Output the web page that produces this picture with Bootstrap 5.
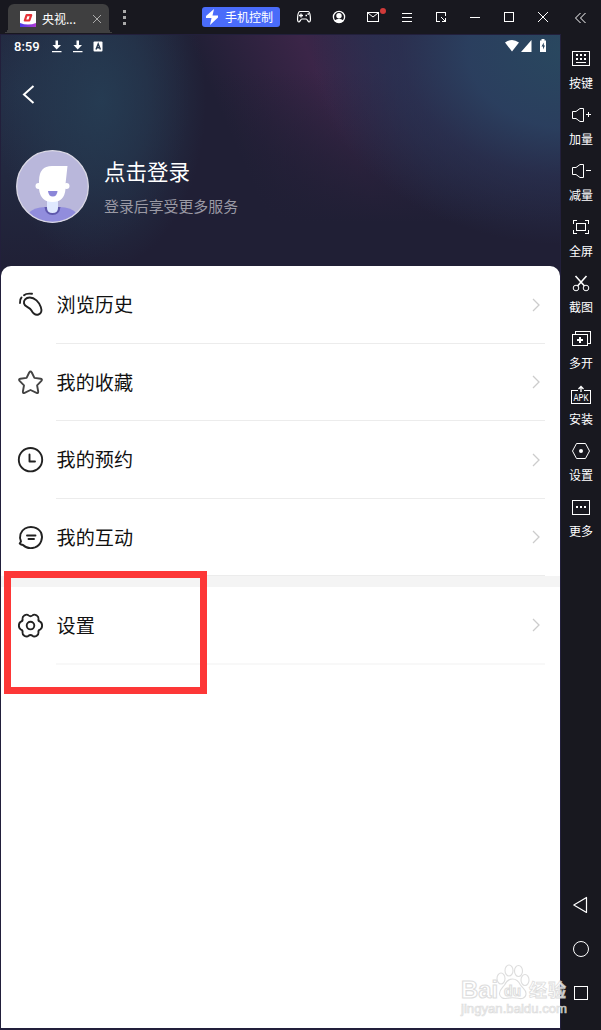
<!DOCTYPE html>
<html lang="zh-CN">
<head>
    <meta charset="UTF-8">
    <meta name="viewport" content="width=device-width, initial-scale=1.0">
    <title>央视频</title>
    <link rel="stylesheet" href="https://cdn.jsdelivr.net/npm/bootstrap@5.3.0/dist/css/bootstrap.min.css">
    <style>
        body {
            font-family: "Noto Sans CJK SC", "Noto Sans", sans-serif;
            background: #18181f;
            color: #fff;
            overflow: hidden;
        }
        svg { display: block; flex: none; }
        .emulator { width: 601px; height: 1030px; }
        .titlebar { height: 34px; }
        .app-tab {
            width: 101px;
            height: 29px;
            margin: 4px 0 0 8px;
            background: #3f3f40;
            border-radius: 6px 6px 0 0;
            font-size: 12px;
            line-height: 28px;
            padding-left: 12px;
        }
        .app-tab::before, .app-tab::after {
            content: "";
            position: absolute;
            bottom: 0;
            width: 5px;
            height: 5px;
        }
        .app-tab::before { left: -5px; background: radial-gradient(circle at 0 0, transparent 5px, #3f3f40 5px); }
        .app-tab::after { right: -5px; background: radial-gradient(circle at 100% 0, transparent 5px, #3f3f40 5px); }
        .tab-name { width: 43px; margin-left: 6px; white-space: nowrap; }
        .phone-btn {
            width: 78px;
            height: 20px;
            margin: 7px 8px 0 70px;
            border-radius: 3px;
            background: #4a6cfa;
            font-size: 12px;
            line-height: 20px;
        }
        .win-icon { width: 34px; height: 34px; }
        .screen { width: 561px; border: 1px solid #221f3b; border-bottom-width: 2px; background: #fff; }
        .profile {
            height: 241px;
            margin-bottom: -10px;
            background:
                radial-gradient(ellipse 105px 170px at 100px 65px, rgba(38, 61, 84, .9) 0, rgba(38, 60, 83, .6) 45%, rgba(32, 31, 53, 0) 100%),
                radial-gradient(ellipse 170px 190px at 20px 55px, rgba(36, 50, 74, .9) 0, rgba(32, 31, 53, 0) 100%),
                radial-gradient(ellipse 260px 195px at 570px 15px, #29485f 0, rgba(43, 64, 96, .95) 40%, rgba(44, 54, 88, .6) 65%, rgba(32, 31, 53, 0) 100%),
                linear-gradient(180deg, rgba(32, 31, 53, 0) 15%, rgba(32, 31, 53, .6) 50%, #201f35 78%),
                linear-gradient(66deg, rgba(60, 38, 72, 0) 44%, rgba(62, 38, 74, .9) 61%, rgba(48, 44, 80, .7) 72%, rgba(40, 44, 76, 0) 95%),
                #201f35;
        }
        .status { height: 24px; padding: 0 13px 0 13px; font: 500 13px/24px Roboto, sans-serif; }
        .back { padding: 26px 0 0 20px; height: 91px; }
        .account { padding-left: 15px; }
        .account-text { margin-left: 15px; }
        .login-name { font-size: 21.5px; line-height: 30px; margin-top: 6px; }
        .login-tip { font-size: 14.9px; line-height: 22px; color: #9a99a4; margin-top: 9px; }
        .menu-list { background: #fff; border-radius: 10px 10px 0 0; color: #111; }
        .menu-row { height: 78px; padding-left: 16px; }
        .menu-row.short { height: 77px; }
        .menu-text {
            margin-left: 12px;
            margin-right: 15px;
            font-size: 19.1px;
            height: 100%;
            border-bottom: 1px solid #ececec;
            padding: 0 4px 0 .6px;
        }
        .soft .menu-text { border-bottom: 2px solid #f8f8f8; }
        .band { height: 11px; background: #f4f4f4; }
        .sidebar { width: 40px; padding: 13px 0 15px; font-size: 12px; }
        .side-item { height: 56px; line-height: 23px; }
        .nav-key { height: 44px; }
        .marker { left: 4px; top: 571px; width: 203px; height: 123px; border: 7px solid #fd3737; }
        .watermark { left: 455px; top: 960px; }
        .line-art { fill: none; stroke: #fff; stroke-width: 1; }
        .crisp { shape-rendering: crispEdges; }
        .dark-art { fill: none; stroke: #222; stroke-width: 1.9; stroke-linecap: round; stroke-linejoin: round; }
        .chev { fill: none; stroke: #ccc; stroke-width: 1.3; }
    </style>
</head>
<body>
<div class="emulator position-relative d-flex flex-column">
    <!-- Title bar -->
    <div class="titlebar d-flex">
        <div class="app-tab position-relative d-flex align-items-center">
            <svg width="16" height="16" viewBox="0 0 16 16">
                <defs><linearGradient id="logoBase"><stop stop-color="#4a38e8"/><stop offset="1" stop-color="#b13bd3"/></linearGradient></defs>
                <path fill="#fff" d="M0 0h16v16H0z"/>
                <path fill="url(#logoBase)" d="M0 12q8 3 16 0v4H0z"/>
                <path fill="none" stroke="#e63338" stroke-width="2.2" stroke-linejoin="round" d="M6.6 4.2h4.6L9.3 9.5H4.8z"/>
            </svg>
            <span class="tab-name">央视...</span>
            <svg class="ms-1" width="16" height="16" viewBox="0 0 16 16"><path stroke="#aaa" stroke-width="1" d="M4 4l8 8M12 4l-8 8"/></svg>
        </div>
        <svg class="crisp ms-2" width="15" height="34" viewBox="0 0 15 34" fill="#aaa"><path d="M6 10h3v3H6zM6 16h3v3H6zM6 22h3v3H6z"/></svg>
        <div class="phone-btn d-flex align-items-center">
            <svg width="23" height="20" viewBox="0 0 23 20"><path fill="#fff" d="M12 2L4 9v2h5.500L8 18l8-7.500V8.500h-5.500z"/></svg>
            <span>手机控制</span>
        </div>
        <svg class="win-icon line-art" viewBox="0 0 34 34">
            <path stroke-width="1.2" d="M12 11.5h8c1.5 0 2 2 2.3 5s.2 5.500-1.100 5.500-1.900-3-3-3h-4.400c-1.100 0-1.700 3-3 3s-1.400-2.500-1.100-5.500.8-5 2.300-5z"/>
            <path d="M13 13.5v4M11 15.5h4M17.5 15.5h1.500M19.5 14h1.500" stroke-width="1.300"/>
        </svg>
        <svg class="win-icon line-art" viewBox="0 0 34 34">
            <circle cx="17" cy="17" r="5.6" stroke-width="1.3"/>
            <circle cx="17" cy="15.7" r="2.7" fill="#fff" stroke="none"/>
            <path d="M12.5 20.5q4.500-3.500 9 0-4.500 4.500-9 0z" fill="#fff" stroke="none"/>
        </svg>
        <svg class="win-icon line-art" viewBox="0 0 34 34">
            <rect x="11.5" y="12.5" width="11" height="9"/>
            <path d="M12 13l5 4 5-4"/>
            <circle cx="27" cy="11" r="3" fill="#d03a3a" stroke="none"/>
        </svg>
        <svg class="win-icon line-art crisp" viewBox="0 0 34 34"><path d="M12 13.5h10M12 17.5h10M12 21.5h10"/></svg>
        <svg class="win-icon line-art crisp" viewBox="0 0 34 34"><path d="M16 21.5h-3.500v-9h9V16M17 17l4.500 4.500M21.500 18v3.500H18"/></svg>
        <svg class="win-icon line-art crisp" viewBox="0 0 34 34"><path d="M12 17.5h10"/></svg>
        <svg class="win-icon line-art crisp" viewBox="0 0 34 34"><rect x="12.5" y="12.5" width="9" height="9"/></svg>
        <svg class="win-icon line-art" viewBox="0 0 34 34"><path d="M12 12l10 10M22 12l-10 10"/></svg>
        <svg class="line-art" width="41" height="34" viewBox="0 0 41 34"><path d="M20.5 13l-5 5 5 5M25.5 13l-5 5 5 5"/></svg>
    </div>

    <div class="d-flex flex-grow-1">
        <!-- App screen -->
        <div class="screen">
            <div class="profile">
                <div class="status d-flex align-items-center">
                    <span>8:59</span>
                    <svg width="66" height="24" viewBox="0 0 66 24" fill="#fff">
                        <path d="M15.5 5.5H18V10h3l-4.300 4.500L12.500 10h3zM12 16h9.500v1.200H12z"/>
                        <path d="M36.5 5.5H39V10h3l-4.300 4.500L33.500 10h3zM33 16h9.500v1.200H33z"/>
                        <rect x="53.5" y="6.5" width="9" height="10" rx="1"/>
                        <path d="M56 14.5l2.200-5.500 2.200 5.500M57 12.8h2.500" fill="none" stroke="#26384e" stroke-width="1.4"/>
                    </svg>
                    <svg class="ms-auto" width="43" height="24" viewBox="0 0 43 24" fill="#fff">
                        <path d="M1 7.5Q8 2.500 15 7.500L8 16.500zM27.500 5v12H17zM36 5.500h1.500V4h3v1.500H42v11q0 .5-.5.500h-5q-.5 0-.5-.5z"/>
                        <path d="M39.8 7.5L37.500 11.500H39v3l2-4h-1.200z" fill="#2b465f"/>
                    </svg>
                </div>
                <div class="back">
                    <svg width="16" height="22" viewBox="0 0 16 22"><path d="M12.5 1L3 9.500l9.500 8.500" fill="none" stroke="#fff" stroke-width="2"/></svg>
                </div>
                <div class="account d-flex">
                    <svg width="73" height="73" viewBox="0 0 73 73">
                        <defs><clipPath id="avatarClip"><circle cx="36.5" cy="36.5" r="36"/></clipPath></defs>
                        <g clip-path="url(#avatarClip)">
                            <path fill="#b9b7db" d="M0 0h73v73H0z"/>
                            <path fill="#918ddd" d="M12 73V64q5-7 18-7h13q13 0 18 7v9z"/>
                            <path fill="#5f59ad" d="M28.5 57h16q-1 8-8 8t-8-8z"/>
                            <path fill="#e0e9ff" d="M31 47h11v11q0 5-5.500 5T31 58z"/>
                            <circle cx="22.5" cy="36" r="3" fill="#fff"/><circle cx="50.5" cy="36" r="3" fill="#fff"/>
                            <path fill="#fff" d="M23 31q0-15 13-15h15.500L49.500 34v5q-1 13-13 13T23 39z"/>
                            <path fill="#8b86d8" d="M32 41h9.500q-.5 5.500-4.700 5.500T32 41z"/>
                        </g>
                        <circle cx="36.5" cy="36.5" r="35.8" fill="none" stroke="#d9d7e4" stroke-width="1.3"/>
                    </svg>
                    <div class="account-text">
                        <div class="login-name">点击登录</div>
                        <div class="login-tip">登录后享受更多服务</div>
                    </div>
                </div>
            </div>

            <div class="menu-list position-relative">
                <div class="menu-row d-flex align-items-center">
                    <svg class="dark-art" width="27" height="28" viewBox="0 0 27 28">
                        <path d="M3 12Q2.500 8.500 4.500 6.500M7 4.200Q9.500 2 15 2.800"/>
                        <path d="M12.800 6.500C8.500 6.500 6.500 9.500 7 12.500c.6 3.500 5.500 3.500 7.500 7 1.500 2.800 4 5 7 4 3-1 3.500-4 2.300-7.500C22 11 17.800 6.500 12.800 6.500z"/>
                    </svg>
                    <div class="menu-text d-flex flex-grow-1 align-items-center justify-content-between">浏览历史<svg class="chev" width="10" height="14" viewBox="0 0 10 14"><path d="M2 1l6 6-6 6"/></svg></div>
                </div>
                <div class="menu-row short d-flex align-items-center">
                    <svg class="dark-art" width="27" height="28" viewBox="0 0 27 28">
                        <path stroke="#444" d="M12.2 3.5q1.300-2 2.600 0l2.600 5.400 6.300.9q2.100.4.700 2.100l-4.300 4.400 1.100 6.200q.2 2.100-1.700 1.300L13.500 21 7.600 23.800q-1.900.8-1.700-1.300l1.100-6.200-4.400-4.400q-1.400-1.700.7-2.100l6.300-.9z"/>
                    </svg>
                    <div class="menu-text d-flex flex-grow-1 align-items-center justify-content-between">我的收藏<svg class="chev" width="10" height="14" viewBox="0 0 10 14"><path d="M2 1l6 6-6 6"/></svg></div>
                </div>
                <div class="menu-row d-flex align-items-center">
                    <svg class="dark-art" width="27" height="28" viewBox="0 0 27 28">
                        <circle cx="13.5" cy="13.7" r="11.7"/><path d="M12.5 8.500v7h5.500"/>
                    </svg>
                    <div class="menu-text d-flex flex-grow-1 align-items-center justify-content-between">我的预约<svg class="chev" width="10" height="14" viewBox="0 0 10 14"><path d="M2 1l6 6-6 6"/></svg></div>
                </div>
                <div class="menu-row short d-flex align-items-center">
                    <svg class="dark-art" width="27" height="28" viewBox="0 0 27 28">
                        <path d="M4 17.5C1.800 12.500 3.500 7 8 4.500 13.500 1.500 21 3 24 8.500c2.500 5.500 0 12.500-6 14.800-4.500 1.500-9 .7-12-2.300q-2-.3-3.300-1.500L4 17.500z"/>
                        <path d="M10 11.5h8.500M11.500 15h5.500"/>
                    </svg>
                    <div class="menu-text d-flex flex-grow-1 align-items-center justify-content-between">我的互动<svg class="chev" width="10" height="14" viewBox="0 0 10 14"><path d="M2 1l6 6-6 6"/></svg></div>
                </div>
                <div class="band"></div>
                <div class="menu-row soft d-flex align-items-center">
                    <svg class="dark-art" width="27" height="28" viewBox="0 0 27 28">
                        <g transform="translate(13.5 13.6)">
                            <path d="M9.500 4Q11.600 3 11.600 0T9.500-4Q7.500-4.600 8-6.700Q8.200-9 6-10.300Q3.500-11.700 2-10.200Q0-8.500-2-10.200Q-3.500-11.700-6-10.300Q-8.200-9-8-6.700Q-7.500-4.600-9.500-4Q-11.600-3-11.600 0T-9.500 4Q-7.500 4.600-8 6.700Q-8.200 9-6 10.300Q-3.500 11.700-2 10.200Q0 8.500 2 10.200Q3.500 11.700 6 10.300Q8.200 9 8 6.700Q7.500 4.600 9.500 4z"/>
                            <circle r="3.8"/>
                        </g>
                    </svg>
                    <div class="menu-text d-flex flex-grow-1 align-items-center justify-content-between">设置<svg class="chev" width="10" height="14" viewBox="0 0 10 14"><path d="M2 1l6 6-6 6"/></svg></div>
                </div>
            </div>
        </div>

        <!-- Emulator tools -->
        <div class="sidebar d-flex flex-column">
            <div class="side-item d-flex flex-column align-items-center">
                <svg class="line-art crisp" width="24" height="24" viewBox="0 0 24 24"><rect x="3.5" y="4.5" width="17" height="14"/><path stroke-width="2" stroke-dasharray="2 2" d="M7 8h10M7 12h10"/><path d="M7 15.5h10"/></svg>
                <span>按键</span>
            </div>
            <div class="side-item d-flex flex-column align-items-center">
                <svg class="line-art" width="24" height="24" viewBox="0 0 24 24"><path d="M3.5 8.500v7H7l4 3h3.500v-13H11l-4 3zM17 11.500h5M19.500 9v5"/></svg>
                <span>加量</span>
            </div>
            <div class="side-item d-flex flex-column align-items-center">
                <svg class="line-art" width="24" height="24" viewBox="0 0 24 24"><path d="M3.5 8.500v7H7l4 3h3.500v-13H11l-4 3zM17 11.500h5"/></svg>
                <span>减量</span>
            </div>
            <div class="side-item d-flex flex-column align-items-center">
                <svg class="line-art crisp" width="24" height="24" viewBox="0 0 24 24"><rect x="7.5" y="8.5" width="9" height="7"/><path d="M4.500 9V5.500H8M16 5.500h3.500V9M19.500 15v3.500H16M8 18.500H4.500V15"/></svg>
                <span>全屏</span>
            </div>
            <div class="side-item d-flex flex-column align-items-center">
                <svg class="line-art" width="24" height="24" viewBox="0 0 24 24"><circle cx="7" cy="17" r="2.8"/><circle cx="17" cy="17" r="2.8"/><path stroke-width="1.6" d="M6.500 5l9 10M17.500 5l-9 10"/></svg>
                <span>截图</span>
            </div>
            <div class="side-item d-flex flex-column align-items-center">
                <svg class="line-art crisp" width="24" height="24" viewBox="0 0 24 24"><rect x="3.5" y="7.5" width="15" height="11"/><path d="M6.500 7V4.500h15v12H19"/><path stroke-width="2" d="M8 13h6M11 10v6"/></svg>
                <span>多开</span>
            </div>
            <div class="side-item d-flex flex-column align-items-center">
                <svg class="line-art" width="24" height="24" viewBox="0 0 24 24"><path class="crisp" d="M9 7.500H2.500v13h19v-13H15"/><path d="M12 9V4M9.500 6L12 3.500 14.500 6" stroke-width="1.3"/><text x="4.5" y="17.5" textLength="15" lengthAdjust="spacingAndGlyphs" font-family="Liberation Mono, monospace" font-size="10" fill="#fff" stroke="none">APK</text></svg>
                <span>安装</span>
            </div>
            <div class="side-item d-flex flex-column align-items-center">
                <svg class="line-art" width="24" height="24" viewBox="0 0 24 24"><path d="M7.500 4.500h9l4 7.500-4 7.500h-9L3.500 12z"/><circle cx="12" cy="12" r="2" fill="#fff" stroke="none"/></svg>
                <span>设置</span>
            </div>
            <div class="side-item d-flex flex-column align-items-center">
                <svg class="line-art crisp" width="24" height="24" viewBox="0 0 24 24"><rect x="3.5" y="5.5" width="17" height="14"/><path stroke-width="2" stroke-dasharray="2 2" d="M7 12h10"/></svg>
                <span>更多</span>
            </div>
            <div class="mt-auto">
                <div class="nav-key d-flex justify-content-center align-items-center"><svg class="line-art" width="20" height="20" viewBox="0 0 20 20"><path stroke-width="1.2" stroke-linejoin="round" d="M15.500 2.500v15L2.800 10z"/></svg></div>
                <div class="nav-key d-flex justify-content-center align-items-center"><svg class="line-art" width="20" height="20" viewBox="0 0 20 20"><circle cx="10" cy="10" r="7.5"/></svg></div>
                <div class="nav-key d-flex justify-content-center align-items-center"><svg class="line-art crisp" width="20" height="20" viewBox="0 0 20 20"><rect x="3.5" y="3.5" width="13" height="13"/></svg></div>
            </div>
        </div>
    </div>

    <div class="marker position-absolute"></div>

    <!-- Watermark -->
    <svg class="watermark position-absolute" width="120" height="60" viewBox="0 0 120 60" font-family="Liberation Sans, Noto Sans CJK SC, sans-serif" fill="#fff" stroke="#d8d8d8" stroke-width="1.1" opacity=".85">
        <text x="6" y="38" font-size="24" font-weight="700" textLength="37" lengthAdjust="spacingAndGlyphs">Bai</text>
        <ellipse cx="46" cy="18.5" rx="4" ry="5.5"/><ellipse cx="54" cy="10.5" rx="4" ry="5.5"/><ellipse cx="63.5" cy="11" rx="4" ry="5.5"/><ellipse cx="70" cy="20" rx="4" ry="5.5"/>
        <path d="M57.5 19q5 0 8 6c2 3 6 5 5.500 9-.5 5-5 5-8 4.300q-5.500-1-11 0c-4 .7-7-1-7.500-4.300-.4-4 3-6 5-9q3-6 8-6z"/>
        <text x="49" y="36" font-size="14" font-weight="700" textLength="17" lengthAdjust="spacingAndGlyphs">du</text>
        <text x="74" y="37" font-size="18" font-weight="700" textLength="37" stroke-width=".8">经验</text>
        <text x="6" y="52.5" font-size="12" textLength="106" lengthAdjust="spacingAndGlyphs" stroke-width=".7">jingyan.baidu.com</text>
    </svg>
</div>
<script src="https://cdn.jsdelivr.net/npm/bootstrap@5.3.0/dist/js/bootstrap.bundle.min.js"></script>
</body>
</html>
